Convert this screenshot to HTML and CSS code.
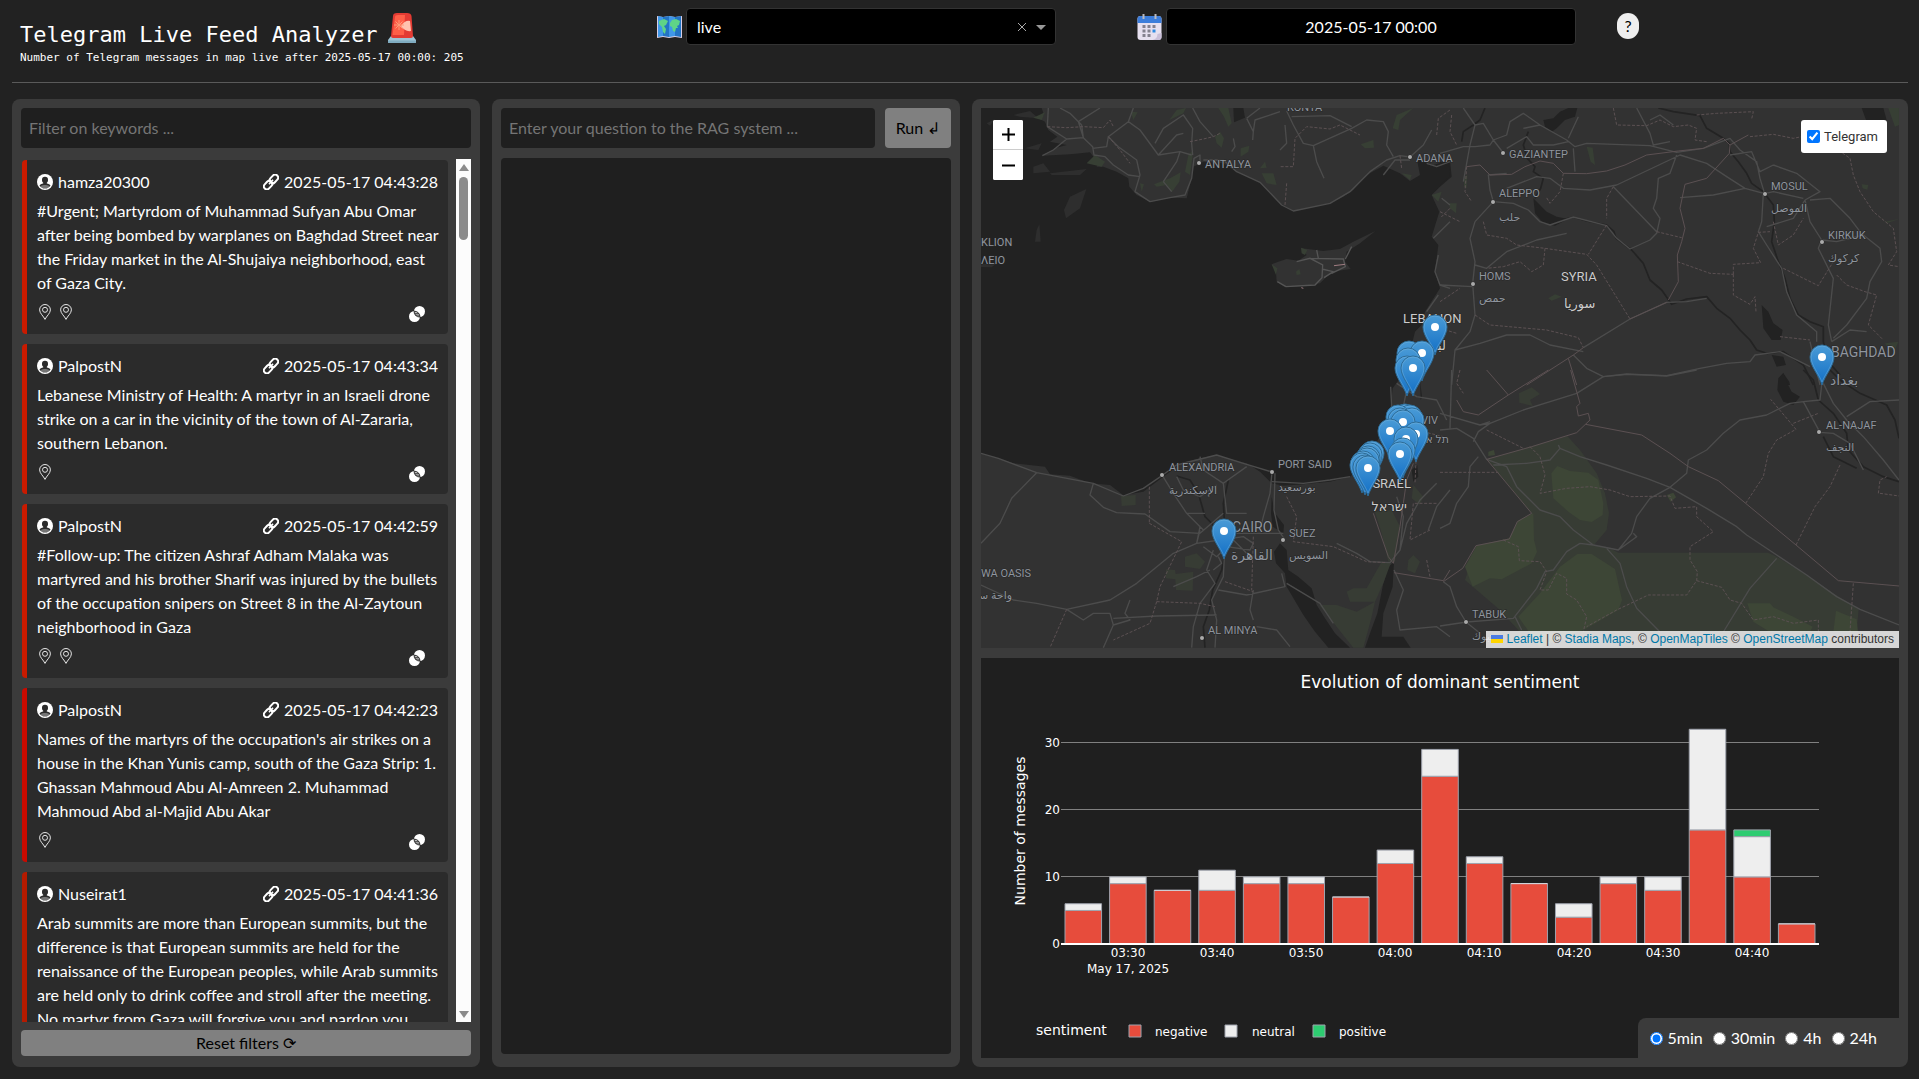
FILE: index.html
```html
<!DOCTYPE html>
<html lang="en">
<head>
<meta charset="utf-8">
<title>Telegram Live Feed Analyzer</title>
<link rel="stylesheet" href="styles.css">
</head>
<body>
<svg class="defs" aria-hidden="true">
  <defs>
    <symbol id="i-user" viewBox="0 0 16 16"><circle cx="8" cy="8" r="8" fill="#fff"/><path fill="#2b2b2b" d="M8 2.800a3 3 0 0 1 3 3.100c0 1.300-.5 2.200-1.200 2.800v.8c1.700.3 3 .9 3.700 1.900A6.600 6.600 0 0 1 8 14.600a6.600 6.600 0 0 1-5.500-3.200C3.200 10.400 4.500 9.800 6.200 9.500v-.8C5.500 8.100 5 7.200 5 5.900a3 3 0 0 1 3-3.100z"/><path fill="#fff" d="M3.800 12c1-.6 2.700-.9 4.200-.9s3.200.3 4.200.9l-1 2.600H4.800z" opacity=".35"/></symbol>
    <symbol id="i-link" viewBox="0 0 16 16"><g fill="none" stroke="#fff" stroke-width="2" transform="rotate(-47 8 8)"><rect x="-1" y="5" width="9.500" height="6" rx="3"/><rect x="7.500" y="5" width="9.500" height="6" rx="3"/><path d="M5 8h6" stroke-width="1.500"/></g></symbol>
    <symbol id="i-pin" viewBox="0 0 16 16"><g fill="none" stroke="#e6e6e6"><path d="M8 15.400C6.600 12.200 2.600 9.300 2.600 5.900a5.400 5.400 0 0 1 10.800 0C13.400 9.300 9.400 12.200 8 15.400z"/><circle cx="8" cy="5.800" r="2.500"/></g></symbol>
    <symbol id="i-similar" viewBox="0 0 16 16"><circle cx="10.500" cy="5.500" r="5.500" fill="#fff"/><circle cx="5.500" cy="10.500" r="5.500" fill="#fff"/><path d="M5.100 5.200a5.500 5.500 0 0 1 5.800 5.800 5.500 5.500 0 0 1-5.800-5.800z" fill="#bbb" stroke="#2b2b2b"/><path d="M5.500 7.500h4.500M6 9.200h4.500" stroke="#2b2b2b" stroke-width=".7"/></symbol>
  </defs>
</svg>

<header class="top">
  <div class="brand">
    <h1>Telegram Live Feed Analyzer
      <svg class="siren" viewBox="0 0 28 30" aria-hidden="true"><path fill="#9fc4d6" d="M3 23h22l3 4v2q0 1-1 1H1q-1 0-1-1v-2z"/><path fill="#7fabc0" d="M0 27.500h28V29q0 1-1 1H1q-1 0-1-1z"/><path fill="#e33b33" d="M5 3q0-3 4-3h10q4 0 4.500 3L25 23q0 2-2 2H5q-2 0-2-2z"/><path fill="#ff5f48" d="M7 4q0-2 3-2h7l-1 20H4.500z"/><path fill="#ffc2ae" d="M13 13q4-6 9-5l1 10q-6 1-10-5z"/><path stroke="#ff9a78" d="M11 7v10M6 12h10M7.500 8.500l7 7M14.500 8.500l-7 7"/></svg>
    </h1>
    <p>Number of Telegram messages in map live after 2025-05-17 00:00: 205</p>
  </div>
  <div class="field">
    <svg class="emoji" viewBox="0 0 25 24" aria-hidden="true"><path fill="#d9cfe6" d="M0 1l6 1 6-1 6 1 7-1v22l-7-1-6 1-6-1-6 1z"/><path fill="#3f97e8" d="M1 1l5 1v19l-5 1zM12 1l6 1v19l-6 1z"/><path fill="#2374c4" d="M6 2l6-1v21l-6-1zM18 2l6-1v21l-6-1z"/><path fill="#5fd487" d="M2 6l5-2 4 2-2 4-2 1 2 3-1 5-2-2-1-5-3-3zM13 8l2-3 4-1 4 2-1 4-2 1 1 2-2 0-1 4-2-1-1-4-2-1z"/></svg>
    <div class="picker">
      <select aria-label="Map"><option>live</option></select>
      <button class="clear" type="button" aria-label="Clear"><svg viewBox="0 0 10 10"><path d="M1 1l8 8M9 1l-8 8" stroke="#aaa" stroke-width="1"/></svg></button>
      <span class="caret"></span>
    </div>
  </div>
  <div class="field date">
    <svg class="emoji" viewBox="0 0 24 26" aria-hidden="true"><rect y="2" width="24" height="24" rx="3" fill="#e6e0f0"/><path fill="#3c7ddb" d="M0 9V5q0-3 3-3h18q3 0 3 3v4z"/><path fill="#c9bfd9" d="M15 26q5-1 5-6l4-1v4q0 3-3 3z"/><path stroke="#b9bac0" stroke-width="2" d="M6 0v5M18 0v5"/><path fill="#84818f" d="M5 11h3v3H5zm5 0h3v3h-3zm5 0h3v3h-3zM5 15.500h3v3H5zm5 0h3v3h-3zM5 20h3v3H5zm5 0h3v3h-3z"/><path fill="#2f8be0" d="M15 15.500h3v3h-3z"/></svg>
    <input type="text" value="2025-05-17 00:00" aria-label="Start date">
  </div>
  <button class="help" type="button">?</button>
</header>

<main class="columns">
  <section class="panel feed">
    <input class="box" type="text" placeholder="Filter on keywords ..." aria-label="Filter on keywords">
    <div class="scroller">
      <div class="cards">
        <article class="card">
          <div class="meta"><svg class="ic"><use href="#i-user"/></svg><span>hamza20300</span><svg class="ic link"><use href="#i-link"/></svg><time>2025-05-17 04:43:28</time></div>
          <p>#Urgent; Martyrdom of Muhammad Sufyan Abu Omar after being bombed by warplanes on Baghdad Street near the Friday market in the Al-Shujaiya neighborhood, east of Gaza City.</p>
          <div class="acts"><svg class="ic"><use href="#i-pin"/></svg><svg class="ic"><use href="#i-pin"/></svg><svg class="ic similar"><use href="#i-similar"/></svg></div>
        </article>
        <article class="card">
          <div class="meta"><svg class="ic"><use href="#i-user"/></svg><span>PalpostN</span><svg class="ic link"><use href="#i-link"/></svg><time>2025-05-17 04:43:34</time></div>
          <p>Lebanese Ministry of Health: A martyr in an Israeli drone strike on a car in the vicinity of the town of Al-Zararia, southern Lebanon.</p>
          <div class="acts"><svg class="ic"><use href="#i-pin"/></svg><svg class="ic similar"><use href="#i-similar"/></svg></div>
        </article>
        <article class="card">
          <div class="meta"><svg class="ic"><use href="#i-user"/></svg><span>PalpostN</span><svg class="ic link"><use href="#i-link"/></svg><time>2025-05-17 04:42:59</time></div>
          <p>#Follow-up: The citizen Ashraf Adham Malaka was martyred and his brother Sharif was injured by the bullets of the occupation snipers on Street 8 in the Al-Zaytoun neighborhood in Gaza</p>
          <div class="acts"><svg class="ic"><use href="#i-pin"/></svg><svg class="ic"><use href="#i-pin"/></svg><svg class="ic similar"><use href="#i-similar"/></svg></div>
        </article>
        <article class="card strong">
          <div class="meta"><svg class="ic"><use href="#i-user"/></svg><span>PalpostN</span><svg class="ic link"><use href="#i-link"/></svg><time>2025-05-17 04:42:23</time></div>
          <p>Names of the martyrs of the occupation's air strikes on a house in the Khan Yunis camp, south of the Gaza Strip: 1. Ghassan Mahmoud Abu Al-Amreen 2. Muhammad Mahmoud Abd al-Majid Abu Akar</p>
          <div class="acts"><svg class="ic"><use href="#i-pin"/></svg><svg class="ic similar"><use href="#i-similar"/></svg></div>
        </article>
        <article class="card mild">
          <div class="meta"><svg class="ic"><use href="#i-user"/></svg><span>Nuseirat1</span><svg class="ic link"><use href="#i-link"/></svg><time>2025-05-17 04:41:36</time></div>
          <p>Arab summits are more than European summits, but the difference is that European summits are held for the renaissance of the European peoples, while Arab summits are held only to drink coffee and stroll after the meeting. No martyr from Gaza will forgive you and pardon you</p>
        </article>
      </div>
      <div class="bar" aria-hidden="true"><i class="up"></i><i class="thumb"></i><i class="down"></i></div>
    </div>
    <button class="reset" type="button">Reset filters ⟳</button>
  </section>

  <section class="panel rag">
    <div class="ask">
      <input class="box" type="text" placeholder="Enter your question to the RAG system ..." aria-label="Question">
      <button class="run" type="button">Run ↲</button>
    </div>
    <div class="answer"></div>
  </section>

  <section class="panel viz">
    <div class="map">
      <svg class="tiles" viewBox="0 0 918 540" preserveAspectRatio="xMidYMid slice" role="img" aria-label="Map of the eastern Mediterranean">
        <defs>
          <linearGradient id="pinfill" x1="0" y1="0" x2="0" y2="1"><stop offset="0" stop-color="#4a9bd6"/><stop offset="1" stop-color="#126fc6"/></linearGradient>
          <g id="pinbody"><path d="M0 28C-3 18-12 9-12 0a12 12 0 0 1 24 0C12 9 3 18 0 28z" fill="url(#pinfill)" stroke="#2e6c97" stroke-width="1"/><path d="M0 25C-3 17-11 8-11 0a11 11 0 0 1 22 0C11 8 3 17 0 25z" fill="none" stroke="#7db8e0" stroke-opacity=".4"/></g>
          <g id="marker"><use href="#pinbody"/><circle r="4" fill="#fff"/></g>
        </defs>
        <rect width="918" height="540" fill="#323232"/>

        <!-- Mediterranean, islands and gulfs -->
        <g transform="translate(-11 -13) scale(.33333)">
          <path fill="#222" d="M33 39H215L222 60 205 70 225 80 235 105 262 125 240 140 290 150 255 160 217 182 300 178 360 172 385 205 375 225 352 215 400 215 440 230 475 250 478 275 500 300 540 320 600 308 650 310 660 270 670 215 700 200 760 205 800 230 870 262 900 295 930 325 970 348 1080 325 1120 305 1150 285 1190 240 1240 212 1290 235 1320 258 1350 240 1340 190 1390 210 1440 195 1445 245 1410 275 1385 300 1408 350 1385 425 1405 450 1395 530 1410 580 1365 650 1355 690 1335 710 1320 770 1290 850 1268 880 1262 935 1232 1020 1180 1110 1140 1145 1080 1160 1000 1168 940 1172 905 1165 870 1130 830 1105 780 1092 740 1080 690 1090 640 1102 580 1145 520 1190 460 1201 420 1170 360 1165 300 1142 240 1138 225 1115 130 1105 33 1075z"/>
          <path fill="#2e2e2e" d="M349 282L330 340 288 370 282 345 300 305zM208 388L212 440 195 440 200 405zM33 508L80 505 65 517 33 516zM130 60L180 48 205 70 150 65zM50 85L75 72 60 92zM165 160L215 145 205 165zM190 215L220 205 240 230 190 235zM240 235L350 222 330 240 245 240z"/>
          <path fill="#323232" d="M905 508L925 500 950 492 985 497 1010 480 995 460 1060 468 1110 462 1150 440 1216 408 1170 445 1130 470 1125 500 1142 522 1085 530 1050 565 1000 572 945 577 920 560 918 530z"/>
          <path fill="#222" d="M790 39H820L825 68 792 82z"/>
          <path fill="none" stroke="#555" stroke-width="4" d="M922 560L948 575 1035 570 1056 548 1058 510 1020 490 980 500M1020 490L1120 492 1126 515 1085 535M1126 492L1145 455M1056 522L1090 530 1062 548M1040 465L1045 490"/>
          <path fill="#3a2f33" stroke="#a07c82" stroke-width="3" d="M1092 512L1125 508M994 578L1000 580"/>
        </g>
        <g transform="translate(-11 262) scale(.33333)" fill="#222">
          <path d="M912 545L930 520 950 540 955 600 985 620 1025 655 1040 705 1065 745 1095 790 1140 833H1075L1035 785 1000 735 950 650 945 610 918 580zM905 380L915 430 942 465 940 490 908 470 903 430zM1256 590L1272 575 1268 650 1240 730 1235 800 1300 800 1322 833H1185L1200 790 1222 730 1240 640zM1325 300L1342 285 1345 320 1330 335zM1350 30L1356 80 1352 90z"/>
        </g>
        <g transform="translate(459 -13) scale(.33333)" fill="#222">
          <path d="M310 75L340 70 360 50 385 39H412L405 65 375 75 350 100 335 110 315 95zM280 310L300 330 320 350 350 365 385 372 345 392 310 385 285 355zM0 200L30 215 28 245 0 270zM965 630L985 650 1000 685 1028 705 1022 735 995 735 970 700zM995 780L1030 785 1038 810 1010 815zM1265 39H1330L1340 75 1280 80zM1030 835L1048 860 1050 870H1020z"/>
        </g>
        <g transform="translate(459 262) scale(.33333)" fill="#222">
          <path d="M1030 8L1042 40 1055 65 1080 80 1060 105 1030 95 1012 60 1015 25z"/>
        </g>

        <!-- Nature reserves -->
        <g transform="translate(459 262) scale(.33333)">
          <g fill="#373c34">
            <path d="M140 268L382 198 420 240 470 310 495 370 507 430 500 480 462 525 520 540 535 548H985L1010 560 1100 615 1180 670 1256 718 1250 786H240L180 720 75 630 110 525 210 505 232 452 275 430z"/>
            <path d="M237 70L275 52 300 72 270 90 278 108 238 98z"/>
          </g>
          <g fill="#3d4636">
            <path d="M334 310L352 288 390 303 445 308 475 330 490 400 488 435 455 456 420 450 385 425 340 385z"/>
            <path d="M75 590L110 527 208 505 235 452 280 430 282 510 291 545 275 580 185 628 150 625 98 650z"/>
            <path d="M235 740L300 670 360 590 412 552H455L525 597 546 690 535 720 440 775 300 833z"/>
            <path d="M922 700H990L1000 712 1060 740 1118 770 1110 786H990L940 755zM1188 722L1250 748 1254 786H1180zM680 375L700 368 708 382 692 395zM145 245L162 240 165 255 145 258z"/>
          </g>
        </g>
        <g transform="translate(-11 262) scale(.33333)" fill="#373c34">
          <path d="M1048 705L1100 705 1160 725 1215 695 1205 740 1180 833H1150L1100 770zM1130 665L1150 655 1190 655 1235 575 1262 580 1240 640 1215 695 1140 695zM1215 425L1265 420 1290 470 1275 575H1255L1235 490zM1315 570L1330 555 1350 575 1335 610 1312 600zM453 378L497 375V405L455 408zM588 598L615 600 617 612 670 605 668 662 618 660 616 628 588 625zM645 560L680 550 705 575 690 597 645 590zM1330 345L1360 380 1350 405 1325 385z"/>
        </g>
        <g transform="translate(-11 -13) scale(.33333)" fill="#373f34">
          <path d="M190 68L225 52 215 75zM598 75L620 45 648 39 640 55zM745 39H775L785 85 775 95 762 65zM735 125L750 110 762 130 755 158 740 145zM812 160L838 152 835 170 812 185zM350 205L375 180 405 200 395 215zM875 235L910 235 920 270 890 265zM1172 148L1210 135 1212 158 1185 160zM1280 60L1330 39 1290 75 1285 105 1268 100zM1295 235L1325 240 1320 255zM510 265L522 268 515 290zM552 268L600 250 632 232 628 260 605 292 590 270 560 275zM655 180L670 165 660 240 645 230zM870 220L885 200 890 218zM993 458L1012 465 1005 480 995 475zM978 530L988 522 992 538 980 540zM1385 300L1415 290 1405 320zM905 508L922 520 918 540zM482 50L503 52 490 75z"/>
        </g>
        <g transform="translate(459 -13) scale(.33333)" fill="#373f34">
          <path d="M440 155L458 158 465 210 452 200zM325 610L345 598 365 605 335 617zM1345 39H1377V90L1365 95zM1265 268L1285 270 1282 284 1268 280zM72 245L82 240 80 280 72 275zM28 325L50 325 48 355 30 340zM1310 350L1335 380 1377 372 1340 385zM1335 745L1375 740 1365 765 1345 760z"/>
        </g>

        <!-- Rivers -->
        <g fill="none" stroke="#232323" stroke-width="5" stroke-linejoin="round">
          <path transform="translate(459 -13) scale(.33333)" d="M135 39L120 75 100 90 70 110 65 140M265 110L250 150 262 190 285 215 280 230 310 250 302 280 285 310M340 385L365 375 400 366 440 378 500 390 522 410 528 430 575 465 610 505 630 555 665 585 695 628 740 612 800 605 830 640 870 670 900 705 930 735 950 765 980 775M655 39L700 50 780 62 800 100 850 130 868 145 870 170 895 200 920 235 935 265 970 290 1000 330 1003 380 995 440 1015 500 1035 550 1050 610 1075 660 1110 680 1150 695 1150 740 1165 800 1200 840M980 775L1030 770 1090 810 1120 870"/>
          <path transform="translate(459 262) scale(.33333)" d="M1090 0L1120 30 1135 90 1180 130 1220 190 1225 240 1270 290 1330 320 1377 335M1170 0L1200 30 1260 70 1340 105 1365 150 1377 205M1150 200L1180 260 1250 295"/>
          <path transform="translate(-11 262) scale(.33333)" d="M620 318L660 330 685 370 705 440 745 480 763 560 755 600 728 660 718 720 700 770 705 833M765 480L760 400 775 330"/>
        </g>

        <!-- Roads -->
        <g fill="none" stroke="#4c4c4c" stroke-width="4" stroke-linejoin="round">
          <path transform="translate(-11 -13) scale(.33333)" d="M235 39L232 95 290 132 340 128 368 155 372 180 405 185 430 210 475 240 510 245M270 39L300 55 335 90 340 128M340 128L325 80 390 39M217 182L250 165 290 132M368 160L410 155 415 125 475 80 490 39M415 125L445 155 500 195 510 240 495 290 540 320 600 308 645 300 665 250 672 190 690 180 690 205M475 80L510 105 565 180 630 170 665 180M565 180L620 120 640 115M555 145L580 100 640 60 668 100 665 145 668 180M580 260L620 200 630 170M580 260L605 290M668 39L690 80 730 125M700 195L760 195 800 230 870 262 935 330 970 348 1080 325 1140 290 1200 230 1250 195 1290 182 1320 186M830 70L870 39M830 70L850 110 848 135M950 48L970 90 1000 145 1030 152 1145 100 1190 75 1240 80 1255 110 1250 150 1270 185M965 65L1080 62 1145 95M850 110L855 75 930 50M1030 152L1040 200 1062 250M945 90L950 145 930 165M790 130L795 155 785 170M1320 186L1360 150 1385 105M1440 200L1400 215 1370 205M1240 240L1275 195 1320 195M1440 380L1390 430M1405 480L1395 530 1410 570 1440 580M1370 650L1405 600M1415 310L1440 330"/>
          <path transform="translate(459 -13) scale(.33333)" d="M0 175L70 155 105 155 150 150 160 135 190 174M70 39L105 90 130 85 160 135M105 90L90 150 70 260M160 135L200 120 210 80 250 55 300 90 380 135 405 155M300 90L250 100M385 140L340 150 280 150 260 125 200 160M405 155L440 145 630 152 710 172 790 160 870 130 900 165 950 200 960 250 974 296M415 65L385 130M590 39L630 115 640 150 690 140M630 75L660 60 700 90M105 380L160 320 150 285 145 240 200 235M160 320L220 325 265 345 300 380 330 390 400 366 500 392 530 430 570 462 630 435 650 415 660 370 640 340 650 310 655 250 690 235 710 180M405 230L400 160M530 270L450 285 370 280 330 250 290 245 200 280M530 270L720 180 800 205 860 245 915 280 974 296 1000 290 1090 310M520 275L650 410M970 296L965 380 955 410 980 450 1025 520 1040 590 1070 660 1130 710 1130 740M720 308L820 300 915 280M1000 210L1070 235 1140 290 1095 315M870 180L935 170 960 230 1000 210M1095 315L1110 380 1145 435 1190 440M1095 315L1060 370 980 395M1145 435L1135 460 1180 550 1165 690 1175 740M1110 315L1170 310 1230 370 1260 410M1190 440L1270 420 1320 460 1325 500 1290 560 1280 610 1220 690 1180 730M98 566L105 500 90 430 105 380M98 566L105 660 90 710 45 765 35 870M45 765L120 745 200 720 270 720 330 750 430 770M105 510L140 520 200 470 290 435 380 415M0 570L98 575M400 780L440 820 490 845 560 838 680 842 780 820 860 805 930 800 945 780 1020 770 1080 800 1110 815M570 672L680 622 740 620 800 610M430 758L570 672M1175 740L1230 705 1280 710M1110 740L1140 870"/>
          <path transform="translate(459 262) scale(.33333)" d="M0 180L50 175 100 205 140 268 200 290 230 350 300 420 360 440 400 480 460 525 535 540 590 500 580 490M535 540L575 490 590 440 630 385 690 352 740 310 745 270 800 240 850 190 900 150 980 135 1050 100 1090 95M30 175L35 0M120 165L150 160 250 120 410 70 490 20 560 12 680 18 770 0M0 130L120 165 150 155M160 285L260 280 330 270 360 235 420 260 500 285 620 325 690 352 800 415 890 470 920 495 1010 555 1100 615 1190 680 1260 718 1377 765M360 235L355 225M100 215L115 185 150 160M0 475L30 460 50 400 85 350 90 290 115 260M460 525L420 520 380 545 340 600 315 605 290 655 220 745 80 756 0 768M500 535L540 580 560 650 590 715 660 786M850 786L930 655 1010 565M10 635L30 650 50 710 78 756M78 756L120 790M225 740L245 780M1090 95L1140 90 1150 0M1090 95L1140 187M1150 40L1180 100 1220 150 1270 200 1330 270 1377 330M1140 187L1180 190 1230 220 1270 300M1220 140L1290 95 1377 90"/>
          <path transform="translate(-11 262) scale(.33333)" d="M33 250L85 265 200 308 370 340 460 378 520 355 577 316 620 285 740 255 820 280 906 306M33 520L90 460 125 385 200 308M370 340L360 375 400 412 440 428 525 432 600 485 690 490 760 430M577 316L610 370 650 430 700 480M650 430L705 430M620 320L640 360 690 380 740 345M690 260L700 300 760 340 830 290M760 340L770 430 830 430M906 306L900 370 880 440 870 480M915 310L912 420 925 480 945 510M800 490L940 490M690 470L680 520 610 550 500 640 420 690 290 718 200 700 130 690 33 645M730 540L710 600 735 640 690 700 670 770 665 833M763 560L760 620 725 690 740 750 735 833M745 660L830 675 945 650 935 610M740 735L560 738 430 745M480 690L465 730 480 750 430 765 400 833M430 765L420 730 370 730 340 750 290 718M690 480L680 520 750 510 820 500 850 520 840 540 770 530M700 530L740 560 790 510 830 550M860 770L920 780 960 830M850 660L840 720 850 750M906 335L1000 340 1080 330 1140 320M1100 520L1160 550 1200 575 1260 578 1290 540 1310 460 1350 390 1400 340M1290 540L1300 440 1280 380M1272 600L1300 660 1280 720 1290 780 1400 770 1440 800M1262 50L1265 110M1280 40L1340 80 1400 90 1430 150M1310 60L1300 110M950 640L1050 700 1090 760M1375 480L1400 410 1440 360M730 600L755 580 745 560M610 650L680 620 720 600"/>
        </g>

        <!-- Borders -->
        <g fill="none" stroke="#5b5052" stroke-width="3" stroke-linejoin="round">
          <g stroke-dasharray="9 5">
            <path transform="translate(-11 -13) scale(.33333)" d="M232 95L290 98 340 95 400 98 420 75 430 95M415 125L450 165 480 205M660 140L700 132 730 125 750 115M932 215H970L975 130 1010 95 1080 102 1110 90 1170 120M1290 182L1295 220M1400 120L1405 70 1440 45M950 265L945 330M1440 340L1410 370"/>
            <path transform="translate(459 -13) scale(.33333)" d="M520 39L530 90 620 92 660 75 700 95 745 90 770 100 765 135 800 140M35 60L30 110 50 150M370 235L360 290 330 325 318 305M80 215L75 290 95 320M0 350L60 380M130 380L140 420 200 430 230 450 315 460 440 478 470 510 570 672M315 460L310 510 275 530 240 500 190 515 140 520M500 390L445 478M520 275L500 310 500 370M650 410L725 428M712 500L810 535 880 538M880 538V508L962 503 940 460 955 412 990 410M880 538V600L930 628 945 605 948 650M105 660L150 690 320 705 415 728 430 758M1000 380L1015 450 1060 420 1090 370M1030 520L1135 572 1180 500M930 125L1000 118 1060 130 1110 120 1180 155 1230 190 1240 240 1260 290 1300 350 1360 400 1370 470 1345 510 1377 515M770 60L830 55 940 50 935 72M1190 540L1220 570 1275 590 1310 600 1285 690 1330 735M0 620L60 580M1020 725L1110 735M0 700L50 715"/>
            <path transform="translate(459 262) scale(.33333)" d="M270 230L300 260 315 315 300 370 380 355 450 350 510 360 570 380 690 378 705 415 770 410 770 440 820 485 750 530 750 570 772 605 770 632 740 675H625L530 720 440 770M770 632L845 652 870 690 905 700 940 750 1000 740 1060 760 1135 750V786M190 510L235 530 238 572 300 575 320 605 300 660 325 660 350 610 380 625V672L410 690 440 740 430 786M140 180L250 235M917 400L970 320 985 250 1010 210 1068 178 992 88M1060 160L1135 130M1068 525L1125 410 1170 350 1200 285M1240 640L1230 786M0 307H175M60 0L50 40 70 70M1315 370L1320 330 1340 320M1320 370L1377 378"/>
            <path transform="translate(-11 262) scale(.33333)" d="M538 350V460M538 460L635 515 570 650 560 695M560 695L690 700 735 710M765 635L850 665M850 500L845 660M290 718L240 833M560 695L540 760 430 810M950 380L980 440 970 515 1090 530 1190 575 1250 578M1300 130L1340 180 1420 200M1340 230L1335 340M1380 480L1320 510 1330 400 1400 400M1370 570L1380 620"/>
          </g>
          <path transform="translate(459 -13) scale(.33333)" d="M80 215L120 210 150 240 215 238 255 215 300 198 340 205 370 235 440 236 500 228 555 210 620 180 715 168 790 160 850 130 870 150 868 175 800 250 735 268 720 340 735 400 725 440 712 480 715 560 685 615M870 150L925 120M400 780L260 870M385 790L410 870M430 758L400 780M570 672L680 622"/>
          <path transform="translate(459 262) scale(.33333)" d="M140 268L275 230 410 188 450 150 445 130 415 138 410 110 420 100 400 30 392 0M437 163L605 195 690 250 745 290 835 332 917 400 1068 525 1195 632 1377 648M325 0L205 75 115 135 70 125 50 90M205 75L140 0M10 635L68 595 108 527 208 507 232 455 275 430 140 268"/>
          <path transform="translate(-11 262) scale(.33333)" d="M1210 430L1255 560 1270 580 1290 470 1310 330 1330 280M1272 608L1420 632 1440 600"/>
        </g>

        <g class="towns">
          <circle cx="218" cy="55" r="2"/><circle cx="429" cy="49" r="2"/><circle cx="522" cy="45" r="2"/><circle cx="512" cy="94" r="2"/><circle cx="492" cy="176" r="2"/><circle cx="784" cy="86" r="2"/><circle cx="841" cy="134" r="2"/><circle cx="838" cy="324" r="2"/><circle cx="485" cy="514" r="2"/><circle cx="181" cy="367" r="2"/><circle cx="291" cy="364" r="2"/><circle cx="302" cy="432" r="2"/><circle cx="221" cy="530" r="2"/>
          <text x="306" y="3">KONYA</text><text x="224" y="60">ANTALYA</text><text x="435" y="54">ADANA</text><text x="0" y="138">KLION</text><text x="0" y="156">ΛΕΙΟ</text>
          <text x="528" y="50">GAZIANTEP</text><text x="518" y="89">ALEPPO</text><text x="518" y="113">حلب</text><text x="498" y="172">HOMS</text><text x="498" y="194">حمص</text>
          <text x="790" y="82">MOSUL</text><text x="790" y="104">الموصل</text><text x="847" y="131">KIRKUK</text><text x="847" y="154">كركوك</text>
          <text x="845" y="321">AL-NAJAF</text><text x="845" y="343">النجف</text><text x="491" y="510">TABUK</text><text x="491" y="532">تبوك</text>
          <text x="188" y="363">ALEXANDRIA</text><text x="188" y="386">الإسكندرية</text><text x="297" y="360">PORT SAID</text><text x="297" y="383">بورسعيد</text>
          <text x="308" y="429">SUEZ</text><text x="308" y="451">السويس</text><text x="0" y="469">WA OASIS</text><text class="end" x="31" y="491">واحة سيوة</text><text x="227" y="526">AL MINYA</text>
          <text class="end" x="457" y="316">TEL AVIV</text><text class="end" x="468" y="335">תל אביב</text>
          <text class="city" x="850" y="249">BAGHDAD</text><text class="city" x="849" y="277">بغداد</text><text class="city" x="251" y="424">CAIRO</text><text class="city" x="250" y="452">القاهرة</text>
        </g>
        <g class="countries">
          <text x="580" y="173">SYRIA</text><text x="583" y="200">سوريا</text><text x="422" y="215">LEBANON</text><text class="end" x="465" y="242">لبنان</text><text class="end" x="430" y="380">ISRAEL</text><text class="end" x="426" y="403">ישראל</text>
        </g>

        <g>
          <use href="#marker" x="454" y="219"/><use href="#pinbody" x="428" y="245"/><use href="#marker" x="441" y="245"/><use href="#pinbody" x="427" y="252"/><use href="#pinbody" x="426" y="260"/><use href="#marker" x="432" y="260"/><use href="#marker" x="841" y="249"/>
          <use href="#pinbody" x="424" y="308"/><use href="#pinbody" x="429" y="309"/><use href="#pinbody" x="417" y="309"/><use href="#pinbody" x="431" y="312"/><use href="#pinbody" x="419" y="312"/><use href="#marker" x="422" y="314"/><use href="#marker" x="409" y="323"/><use href="#marker" x="435" y="326"/><use href="#marker" x="425" y="331"/><use href="#pinbody" x="422" y="342"/><use href="#marker" x="419" y="346"/>
          <use href="#pinbody" x="391" y="345"/><use href="#pinbody" x="389" y="347"/><use href="#pinbody" x="387" y="350"/><use href="#pinbody" x="386" y="352"/><use href="#pinbody" x="382" y="355"/><use href="#pinbody" x="381" y="357"/><use href="#pinbody" x="384" y="359"/><use href="#marker" x="387" y="360"/><use href="#marker" x="243" y="423"/>
        </g>
      </svg>
      <div class="zoom"><button type="button" aria-label="Zoom in"><svg viewBox="0 0 13 13"><path d="M6.500 0v13M0 6.500h13"/></svg></button><button type="button" aria-label="Zoom out"><svg viewBox="0 0 13 13"><path d="M0 6.500h13"/></svg></button></div>
      <label class="layers"><input type="checkbox" checked><span>Telegram</span></label>
      <div class="credits"><svg class="flag" viewBox="0 0 12 8"><path fill="#4c7be1" d="M0 0h12v4H0z"/><path fill="#ffd500" d="M0 4h12v4H0z"/></svg> <a href="#">Leaflet</a> | © <a href="#">Stadia Maps</a>, © <a href="#">OpenMapTiles</a> © <a href="#">OpenStreetMap</a> contributors</div>
    </div>

    <div class="chart">
      <svg viewBox="0 0 918 400" role="img" aria-label="Evolution of dominant sentiment">
        <text class="t17 mid" x="459" y="30">Evolution of dominant sentiment</text>
        <path class="grid" d="M80 84.500H838M80 151.500H838M80 218.500H838"/>
        <g class="bars" transform="translate(80 286) scale(44.588 -6.71)">
          <g class="neg"><rect x=".09" width=".82" height="5"/><rect x="1.090" width=".82" height="9"/><rect x="2.090" width=".82" height="8"/><rect x="3.090" width=".82" height="8"/><rect x="4.090" width=".82" height="9"/><rect x="5.090" width=".82" height="9"/><rect x="6.090" width=".82" height="7"/><rect x="7.090" width=".82" height="12"/><rect x="8.090" width=".82" height="25"/><rect x="9.090" width=".82" height="12"/><rect x="10.090" width=".82" height="9"/><rect x="11.090" width=".82" height="4"/><rect x="12.090" width=".82" height="9"/><rect x="13.090" width=".82" height="8"/><rect x="14.090" width=".82" height="17"/><rect x="15.090" width=".82" height="10"/><rect x="16.090" width=".82" height="3"/></g>
          <g class="neu"><rect x=".09" y="5" width=".82" height="1"/><rect x="1.090" y="9" width=".82" height="1"/><rect x="3.090" y="8" width=".82" height="3"/><rect x="4.090" y="9" width=".82" height="1"/><rect x="5.090" y="9" width=".82" height="1"/><rect x="7.090" y="12" width=".82" height="2"/><rect x="8.090" y="25" width=".82" height="4"/><rect x="9.090" y="12" width=".82" height="1"/><rect x="11.090" y="4" width=".82" height="2"/><rect x="12.090" y="9" width=".82" height="1"/><rect x="13.090" y="8" width=".82" height="2"/><rect x="14.090" y="17" width=".82" height="15"/><rect x="15.090" y="10" width=".82" height="6"/></g>
          <g class="pos"><rect x="15.090" y="16" width=".82" height="1"/></g>
          <path class="cap" d="M2.090 8h.82M6.090 7h.82M10.090 9h.82M16.090 3h.82"/>
        </g>
        <path stroke="#fff" stroke-width="2" d="M80 286H838"/>
        <g class="t12 end"><text x="79" y="89">30</text><text x="79" y="156">20</text><text x="79" y="223">10</text><text x="79" y="290">0</text></g>
        <g class="t12 mid"><text x="147" y="299">03:30</text><text x="147" y="315">May 17, 2025</text><text x="236" y="299">03:40</text><text x="325" y="299">03:50</text><text x="414" y="299">04:00</text><text x="503" y="299">04:10</text><text x="593" y="299">04:20</text><text x="682" y="299">04:30</text><text x="771" y="299">04:40</text></g>
        <text class="t14 mid" transform="translate(44 173) rotate(-90)">Number of messages</text>
        <text class="t14" x="55" y="377">sentiment</text>
        <g class="bars"><rect class="neg" x="148" y="367" width="12" height="12"/><rect class="neu" x="244" y="367" width="12" height="12"/><rect class="pos" x="332" y="367" width="12" height="12"/></g>
        <g class="t12"><text x="174" y="378">negative</text><text x="271" y="378">neutral</text><text x="358" y="378">positive</text></g>
      </svg>
      <div class="steps">
        <label><input type="radio" name="step" checked>5min</label>
        <label><input type="radio" name="step">30min</label>
        <label><input type="radio" name="step">4h</label>
        <label><input type="radio" name="step">24h</label>
      </div>
    </div>
  </section>
</main>
</body>
</html>
```
FILE: styles.css
```css
* { box-sizing: border-box; }

body {
  margin: 0;
  height: 100vh;
  padding: 0 11px 12px 12px;
  display: flex;
  flex-direction: column;
  background: #222;
  color: #fff;
  font: 16px/24px Lato, sans-serif;
}

button, input, select { font: inherit; }
h1, p { margin: 0; }
svg { display: block; }
.defs { position: absolute; width: 0; height: 0; }

/* Header */
.top {
  display: grid;
  grid-template-columns: 645fr 399fr 81fr 439fr 41fr 291fr;
  align-items: start;
  height: 83px;
  border-bottom: 1px solid #5a5a5a;
  padding-top: 8px;
}
.brand { padding: 5px 0 0 8px; font-family: "DejaVu Sans Mono", "Liberation Mono", monospace; white-space: nowrap; }
.brand h1 { display: flex; gap: 10px; font-size: 22px; line-height: 44px; font-weight: 400; height: 38px; }
.siren { width: 28px; height: 30px; }
.brand p { font-size: 11px; line-height: 14px; }
.field { display: flex; align-items: center; gap: 4px; }
.emoji { width: 25px; height: 26px; flex: none; }
.date { grid-column: 4; }
.picker { position: relative; flex: 1; display: flex; }
.picker select, .date input {
  width: 100%;
  min-width: 0;
  height: 37px;
  border: 1px solid #333;
  border-radius: 4px;
  background: #000;
  color: #fff;
}
.picker select { appearance: none; padding: 0 10px; }
.date input { text-align: center; padding: 0; }
.clear { position: absolute; right: 28px; top: 10px; width: 12px; height: 18px; padding: 1px; border: 0; background: none; }
.caret { position: absolute; right: 10px; top: 17px; border: 5px solid transparent; border-top-color: #999; border-bottom: 0; }
.help {
  grid-column: 6;
  width: 22px;
  height: 26px;
  margin-top: 5px;
  padding: 0;
  border: 0;
  border-radius: 11px;
  background: #efefef;
  color: #000;
}

/* Panels */
.columns {
  flex: 1;
  min-height: 0;
  margin-top: 16px;
  display: grid;
  grid-template-columns: 1fr 1fr 2fr;
  gap: 12px;
}
.panel {
  min-width: 0;
  min-height: 0;
  display: flex;
  flex-direction: column;
  padding: 9px;
  border-radius: 8px;
  background: #3b3b3b;
}
.box {
  width: 100%;
  height: 40px;
  flex: none;
  padding: 0 8px 2px;
  border: 0;
  border-radius: 4px;
  background: #1f1f1f;
  color: #fff;
}
.box::placeholder { color: #757575; }
.reset, .run { border: 0; border-radius: 4px; background: #808080; color: #000; padding: 0; }

/* Message feed */
.scroller { flex: 1; min-height: 0; display: flex; gap: 8px; margin: 11px 0 8px; }
.cards { flex: 1; overflow: hidden; padding: 1px 0 0 1px; }
.card {
  margin-bottom: 10px;
  padding: 10px;
  border-left: 5px solid #c91a00;
  border-radius: 4px;
  background: #2b2b2b;
}
.card.strong { border-color: #c80a00; }
.card.mild { border-color: #b51a00; }
.card p { margin-right: -5px; }
.meta, .acts { display: flex; align-items: center; gap: 5px; height: 24px; }
.meta { margin-bottom: 5px; }
.acts { margin-top: 5px; }
.ic { width: 16px; height: 16px; flex: none; }
.link { margin-left: auto; }
.similar { margin: 4px 13px 0 auto; }
.bar {
  width: 15px;
  display: flex;
  flex-direction: column;
  align-items: center;
  padding: 5px 0 4px;
  background: #fcfcfc;
}
.up, .down { border: 5px solid transparent; }
.up { border-top: 0; border-bottom: 7px solid #8b8b8b; }
.down { border-bottom: 0; border-top: 7px solid #8b8b8b; margin-top: auto; }
.thumb { width: 9px; height: 63px; margin-top: 6px; border-radius: 5px; background: #8b8b8b; }
.reset { height: 26px; flex: none; margin-bottom: 2px; }

/* RAG */
.ask { display: flex; gap: 10px; margin-bottom: 10px; }
.ask .box { flex: 1; min-width: 0; }
.run { width: 66px; }
.answer { flex: 1; margin-bottom: 4px; border-radius: 4px; background: #1f1f1f; }

/* Map */
.map { position: relative; flex: 540 1 0; min-height: 0; overflow: hidden; background: #323232; }
.tiles { width: 100%; height: 100%; }
.towns, .countries { font-family: Roboto, "DejaVu Sans", sans-serif; stroke: #262626; stroke-width: 1px; paint-order: stroke; }
.towns { font-size: 11px; fill: #8f959e; }
.towns circle { fill: #aaa; }
.towns .city { font-size: 14px; }
.countries { font-size: 13px; fill: #ccc; }
.end { text-anchor: end; }
.mid { text-anchor: middle; }
.zoom { position: absolute; left: 12px; top: 12px; width: 30px; border-radius: 2px; overflow: hidden; background: #fff; }
.zoom button { display: grid; place-items: center; width: 30px; height: 30px; padding: 0; border: 0; background: #fff; }
.zoom button:first-child { border-bottom: 1px solid #ccc; }
.zoom svg { width: 13px; height: 13px; stroke: #000; stroke-width: 2; }
.layers {
  position: absolute;
  right: 12px;
  top: 12px;
  display: flex;
  align-items: center;
  gap: 4px;
  height: 33px;
  padding: 0 9px 0 6px;
  border-radius: 3px;
  background: #fff;
  color: #333;
  font: 13px/20px Roboto, sans-serif;
}
.layers input, .steps input { width: 13px; height: 13px; margin: 0; }
.credits {
  position: absolute;
  right: 0;
  bottom: 0;
  padding: 0 5px;
  background: rgba(255, 255, 255, .8);
  color: #333;
  font: 12px/17px "Liberation Sans", Arial, sans-serif;
  white-space: nowrap;
}
.credits a { color: #0078a8; text-decoration: none; }
.flag { display: inline-block; width: 12px; height: 8px; }

/* Chart */
.chart { position: relative; flex: 400 1 0; min-height: 0; margin-top: 10px; background: #1f1f1f; }
.chart > svg { width: 100%; height: 100%; font-family: Verdana, "DejaVu Sans", sans-serif; fill: #fff; }
.t17 { font-size: 17px; }
.t14 { font-size: 14px; }
.t12 { font-size: 12px; }
.grid { stroke: #808080; }
.bars rect { stroke: #9fa3ad; stroke-width: 1px; vector-effect: non-scaling-stroke; }
.cap { stroke: #d8dae0; vector-effect: non-scaling-stroke; }
.neg { fill: #e74c3c; }
.neu { fill: #eee; }
.pos { fill: #2ecc71; }
.steps {
  position: absolute;
  right: 0;
  bottom: 0;
  display: flex;
  gap: 10px;
  height: 40px;
  padding: 0 22px 0 12px;
  align-items: center;
  border-top-left-radius: 8px;
  background: #3b3b3b;
}
.steps label { display: flex; align-items: center; gap: 5px; }
```
